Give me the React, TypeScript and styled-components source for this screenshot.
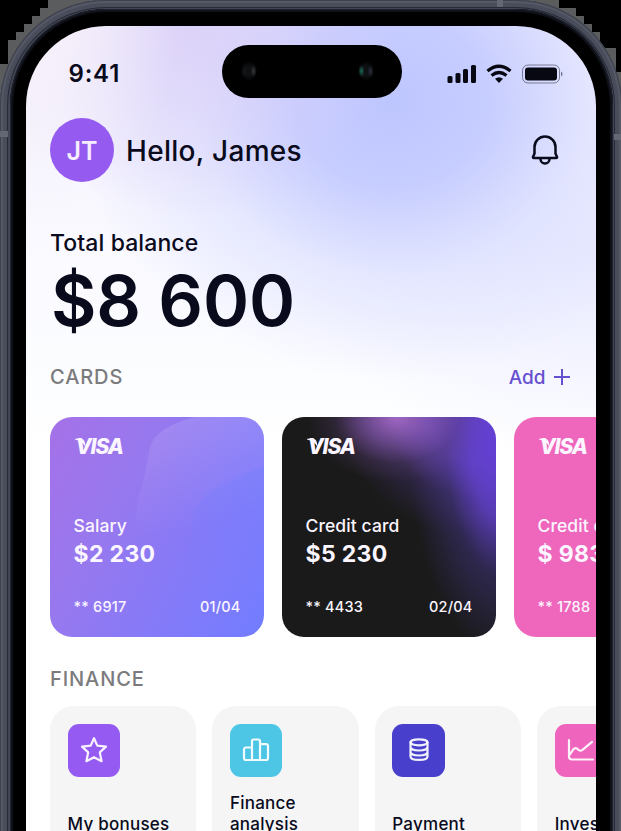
import React from "react";
import styled, { createGlobalStyle, css } from "styled-components";

const GlobalStyle = createGlobalStyle`
  * { box-sizing: border-box; }
  html, body { margin: 0; height: 831px; overflow: hidden; background: #000; }
  body { font-family: Inter, "Liberation Sans", sans-serif; color: #090a1c; }
`;

const Stage = styled.main`
  position: relative;
  width: 621px;
  height: 831px;
  overflow: hidden;
  background: #000;
`;

const Corners = styled.svg`
  position: absolute;
  inset: 0;
`;

const Frame = styled.div`
  position: relative;
  width: 622px;
  height: 1250px;
  padding: 9px 9px 9px 10px;
  border-radius: 106px;
  background: #454957;
  box-shadow: inset 0 0 0 1px #3e414c, inset 0 0 1px 3px #565a67, inset 0 0 0 7px #494d5b, inset 0 0 1px 8px #242734;
`;

const AntennaBand = styled.i<{ $x: number; $y: number; $vertical?: boolean }>`
  position: absolute;
  left: ${(p) => p.$x}px;
  top: ${(p) => p.$y}px;
  width: ${(p) => (p.$vertical ? 6 : 8)}px;
  height: ${(p) => (p.$vertical ? 7 : 6)}px;
  background: #636773;
`;

const Bezel = styled.div`
  height: 100%;
  padding: 17px 17px 17px 16px;
  border-radius: 97px;
  background: #000;
  box-shadow: inset 0 0 0 1px #20222d, inset 0 0 1px 3px #10121a;
`;

const Screen = styled.div`
  width: 569.5px;
  height: 100%;
  padding: 18px 0 0 24px;
  overflow: hidden;
  border-radius: 80px;
  background:
    radial-gradient(ellipse 150px 190px at 0 0, #f6f1fa 10%, #f6f1fa00 100%),
    radial-gradient(ellipse 210px 190px at 165px 0, #dacdf7cc 0%, #dccaf600 100%),
    radial-gradient(ellipse 320px 280px at 365px 75px, #bec6ff 0%, #c3caffee 30%, #d9ddff99 62%, #f4f6ff00 100%),
    radial-gradient(ellipse 300px 200px at 569px 230px, #eaebff 0%, #f4f6ff00 100%),
    linear-gradient(180deg, #f3f0fd 0, #fafaff 240px, #fcfdff 350px, #fff 430px);
`;

const StatusBar = styled.div`
  display: flex;
  align-items: center;
  height: 54px;
  padding-left: 18.5px;
`;

const Clock = styled.span`
  width: 153.5px;
  padding-top: 4px;
  font-size: 24px;
  font-weight: 600;
  letter-spacing: 0.8px;
`;

const Island = styled.div`
  display: flex;
  align-items: center;
  justify-content: space-between;
  width: 180px;
  height: 53px;
  padding: 0 27px 0 18px;
  border-radius: 27px;
  background: #000;
`;

const Lens = styled.span<{ $tint: string; $shade: string }>`
  width: 18px;
  height: 20px;
  border-radius: 50%;
  background:
    radial-gradient(ellipse 3px 6px at 25% 50%, ${(p) => p.$tint}, transparent),
    radial-gradient(ellipse 3px 6px at 75% 50%, ${(p) => p.$shade}, transparent),
    radial-gradient(ellipse 9px 10px at center, #0e1012 50%, transparent);
`;

const StatusIcons = styled.svg`
  margin: 5px 0 0 45px;
`;

const Header = styled.header`
  display: flex;
  align-items: center;
  gap: 12px;
  height: 64px;
  margin-top: 20px;
  padding-right: 36px;
`;

const Avatar = styled.div`
  display: grid;
  place-items: center;
  width: 64px;
  height: 64px;
  padding-top: 1px;
  border-radius: 50%;
  background: #955bf1;
  color: #f6edff;
  font-size: 25px;
  font-weight: 600;
`;

const Greeting = styled.h1`
  flex: 1;
  margin: 2px 0 0;
  font-size: 28px;
  font-weight: 500;
  line-height: 36px;
  letter-spacing: 0.3px;
`;

const Balance = styled.section`
  margin-top: 46px;
`;

const BalanceLabel = styled.div`
  font-size: 23px;
  font-weight: 500;
  line-height: 30px;
  letter-spacing: 0.1px;
`;

const BalanceAmount = styled.div`
  height: 84px;
  padding-left: 1px;
  font-size: 70px;
  font-weight: 600;
  line-height: 85px;
  letter-spacing: -0.2px;
  white-space: nowrap;
`;

const SectionHead = styled.div<{ $top: number }>`
  display: flex;
  align-items: center;
  justify-content: space-between;
  height: 30px;
  margin-top: ${(p) => p.$top}px;
  padding-right: 26px;
`;

const SectionTitle = styled.h2`
  margin: 0;
  color: #7b7b7d;
  font-size: 20px;
  font-weight: 500;
  letter-spacing: 0.9px;
`;

const AddButton = styled.button`
  display: flex;
  align-items: center;
  gap: 8px;
  padding: 0;
  border: 0;
  background: none;
  color: #6650d0;
  font: 500 19px Inter, sans-serif;
`;

const CardRow = styled.div`
  display: flex;
  gap: 18px;
  margin-top: 25px;
`;

type CardKind = "violet" | "dark" | "pink";

const cardBackground: Record<CardKind, ReturnType<typeof css>> = {
  violet: css`background: linear-gradient(118deg, #a571e8 0%, #9878ee 32%, #857af8 65%, #717dff 100%);`,
  dark: css`
    background:
      radial-gradient(ellipse 90px 66px at 115px 0, #a067c4 0%, #8c5cb8aa 35%, #62437d44 70%, #62437d00 100%),
      radial-gradient(ellipse 95px 215px at 222px 25px, #6540d8 0%, #6040c8dd 35%, #46378a77 62%, #2b234d00 100%),
      radial-gradient(ellipse 140px 120px at 200px 0, #7044dc 0%, #6b46c4dd 38%, #4a357d66 68%, #2b234d00 100%),
      #1a1a1a;
  `,
  pink: css`background: #ee67bc;`,
};

const Card = styled.article<{ $kind: CardKind }>`
  position: relative;
  display: flex;
  flex: none;
  flex-direction: column;
  width: 214px;
  height: 220px;
  padding: 17px 23.5px 19px 23.5px;
  overflow: hidden;
  border-radius: 22px;
  color: #fbf6ff;
  ${(p) => cardBackground[p.$kind]}
`;

const CardWaves = styled.svg`
  position: absolute;
  inset: 0;
`;

const Visa = styled.div`
  position: relative;
  height: 26px;
  padding-left: 2px;
  font: italic 800 21px/26px Inter, sans-serif;
  letter-spacing: -1.1px;
`;

const VisaFlag = styled.svg`
  position: absolute;
  left: 1px;
  top: 4px;
`;

const CardName = styled.div`
  position: relative;
  margin-top: 53px;
  font-size: 17.5px;
  font-weight: 500;
  line-height: 26px;
  letter-spacing: 0.1px;
  white-space: nowrap;
`;

const CardAmount = styled.div`
  position: relative;
  font-size: 23px;
  font-weight: 700;
  line-height: 30px;
  letter-spacing: 0.35px;
  white-space: nowrap;
`;

const CardFoot = styled.div`
  position: relative;
  display: flex;
  justify-content: space-between;
  margin-top: auto;
  font-size: 14.5px;
  font-weight: 500;
  line-height: 22px;
  letter-spacing: 0.2px;
`;

const TileRow = styled.div`
  display: flex;
  gap: 16px;
  margin-top: 12px;
`;

const Tile = styled.article`
  display: flex;
  flex: none;
  flex-direction: column;
  justify-content: space-between;
  width: 146.4px;
  height: 146px;
  padding: 18px 17.5px;
  border-radius: 24px;
  background: #f5f5f6;
  font-size: 17px;
  font-weight: 500;
  line-height: 20.5px;
  letter-spacing: 0.25px;
  white-space: nowrap;
`;

const TileIcon = styled.div<{ $color: string }>`
  display: grid;
  place-items: center;
  width: 52.5px;
  height: 52.5px;
  border-radius: 11px;
  background: ${(p) => p.$color};
`;

const Glyph = ({ children }: { children: React.ReactNode }) => (
  <svg width="28" height="28" viewBox="0 0 28 28" fill="none" stroke="#fff" strokeOpacity="0.92" strokeWidth="2.2" strokeLinejoin="round" strokeLinecap="round">
    {children}
  </svg>
);

const StarGlyph = () => (
  <Glyph>
    <path d="M14 2.200 17.300 9.600 26 10.600 19.800 16.400 21.600 25.200 14 21.200 6.400 25.200 8.200 16.400 2 10.600 10.700 9.600Z" />
  </Glyph>
);

const BarsGlyph = () => (
  <Glyph>
    <path d="M10 24V5a1.500 1.500 0 0 1 1.500-1.500h5A1.500 1.500 0 0 1 18 5V24M10 11.500H4A1.800 1.800 0 0 0 2 13.300v8.700a2 2 0 0 0 2 2H24a2 2 0 0 0 2-2V10A1.800 1.800 0 0 0 24 8.200h-6" />
  </Glyph>
);

const CoinsGlyph = () => (
  <Glyph>
    <ellipse cx="14" cy="6.300" rx="8.500" ry="3" />
    <path d="M5.500 6.300v14.200c0 2 3.500 3.400 8.500 3.400s8.500-1.400 8.500-3.400v-14.200M5.500 11c0 2 3.500 3.500 8.500 3.500s8.500-1.500 8.500-3.500M5.500 16c0 2 3.500 3.500 8.500 3.500s8.500-1.500 8.500-3.500" />
  </Glyph>
);

const ChartGlyph = () => (
  <Glyph>
    <path d="M2 4V20.500a3 3 0 0 0 3 3H26M2.500 19 6.500 13.200q1.700-2.200 4.200 0l.8.700q2 1.600 4 0L25 5.800" />
  </Glyph>
);

const cards: { kind: CardKind; name: string; amount: string; digits: string; date: string }[] = [
  { kind: "violet", name: "Salary", amount: "$2 230", digits: "6917", date: "01/04" },
  { kind: "dark", name: "Credit card", amount: "$5 230", digits: "4433", date: "02/04" },
  { kind: "pink", name: "Credit card", amount: "$ 983", digits: "1788", date: "" },
];

const tiles = [
  { label: <>My bonuses</>, color: "#955af2", icon: <StarGlyph /> },
  { label: <>Finance<br />analysis</>, color: "#4dc6e6", icon: <BarsGlyph /> },
  { label: <>Payment</>, color: "#4840cc", icon: <CoinsGlyph /> },
  { label: <>Investment</>, color: "#ef65bd", icon: <ChartGlyph /> },
];

export default function App() {
  return (
    <Stage>
      <GlobalStyle />
      <Corners width="621" height="831" shapeRendering="crispEdges">
        <path fill="#5a5c5e" d="M64 0H48V8H40V16H32V24H24V32H16V40H8V64H0V110H110V0ZM549 0H559V8H576V16H584V24H592V32H600V48H608V48H616V72H621V110H510V0Z" />
      </Corners>
      <Frame>
        <AntennaBand $x={0} $y={131} />
        <AntennaBand $x={614} $y={134} />
        <AntennaBand $x={497} $y={0} $vertical />
        <Bezel>
          <Screen>
            <StatusBar>
              <Clock>9:41</Clock>
              <Island>
                <Lens $tint="#15181b" $shade="#34383a" />
                <Lens $tint="#1c6a58" $shade="#292d3e" />
              </Island>
              <StatusIcons width="116" height="26" viewBox="0 0 116 26">
                <g fill="#080812">
                  <rect x="0.500" y="15" width="5" height="7" rx="1.500" />
                  <rect x="8.500" y="12" width="5" height="10" rx="1.500" />
                  <rect x="16" y="8" width="5" height="14" rx="1.500" />
                  <rect x="24" y="4" width="5" height="18" rx="1.500" />
                  <path d="m52 22-4-4.200q4-3.200 8 0Z" />
                  <rect x="78" y="6.500" width="32" height="13" rx="3" />
                  <path d="M114 10.500q1.500.6 1.500 2.500t-1.500 2.500Z" fillOpacity=".5" />
                </g>
                <g fill="none" stroke="#080812">
                  <path d="M40.500 10q11.500-9.500 23 0M44.500 14.500q7.500-6 15 0" strokeWidth="3.200" />
                  <rect x="75.500" y="4" width="37" height="18" rx="5.500" strokeOpacity=".45" />
                </g>
              </StatusIcons>
            </StatusBar>

            <Header>
              <Avatar>JT</Avatar>
              <Greeting>Hello, James</Greeting>
              <svg width="30" height="32" viewBox="0 0 30 32" fill="none" stroke="#090a1c" strokeWidth="2.500" strokeLinejoin="round" strokeLinecap="round">
                <path d="M4.500 13a10.500 10.500 0 0 1 21 0v6.500l1.500 3.500q.3 1-.8 1h-22.400q-1.100 0-.8-1l1.500-3.500ZM10.500 24.500v.5a4.500 4.500 0 0 0 9 0v-.5" />
              </svg>
            </Header>

            <Balance>
              <BalanceLabel>Total balance</BalanceLabel>
              <BalanceAmount>$8 600</BalanceAmount>
            </Balance>

            <SectionHead $top={20}>
              <SectionTitle>CARDS</SectionTitle>
              <AddButton>
                Add
                <svg width="16" height="16" stroke="currentColor" strokeWidth="2">
                  <path d="M8 0V16M0 8H16" />
                </svg>
              </AddButton>
            </SectionHead>

            <CardRow>
              {cards.map((card) => (
                <Card key={card.digits} $kind={card.kind}>
                  {card.kind === "violet" && (
                    <CardWaves width="214" height="220">
                      <defs>
                        <linearGradient id="wave" x1="0" y1="0" x2="0.100" y2="1">
                          <stop offset="0" stopColor="#fff" stopOpacity=".13" />
                          <stop offset="0.550" stopColor="#fff" stopOpacity="0" />
                        </linearGradient>
                        <linearGradient id="swell" x1="0" y1="0" x2="0" y2="1">
                          <stop offset="0" stopColor="#6f7fff" stopOpacity=".3" />
                          <stop offset="0.800" stopColor="#6f7fff" stopOpacity="0" />
                        </linearGradient>
                      </defs>
                      <path fill="url(#wave)" d="M145 0Q106 10 100 30L92 70Q82 95 90 130L110 220H214V0Z" />
                      <path fill="url(#swell)" d="M214 49Q175 64 158 76 142 88 142 116L136 160 214 190Z" />
                    </CardWaves>
                  )}
                  <Visa>
                    VISA
                    <VisaFlag width="14" height="10" fill="currentColor">
                      <path d="M0 .8H6Q9 1 9.700 4L10.600 9Q7 2.800 0 1.600Z" />
                    </VisaFlag>
                  </Visa>
                  <CardName>{card.name}</CardName>
                  <CardAmount>{card.amount}</CardAmount>
                  <CardFoot>
                    <span>** {card.digits}</span>
                    <span>{card.date}</span>
                  </CardFoot>
                </Card>
              ))}
            </CardRow>

            <SectionHead $top={27}>
              <SectionTitle>FINANCE</SectionTitle>
            </SectionHead>

            <TileRow>
              {tiles.map((tile) => (
                <Tile key={tile.color}>
                  <TileIcon $color={tile.color}>{tile.icon}</TileIcon>
                  <div>{tile.label}</div>
                </Tile>
              ))}
            </TileRow>
          </Screen>
        </Bezel>
      </Frame>
    </Stage>
  );
}
